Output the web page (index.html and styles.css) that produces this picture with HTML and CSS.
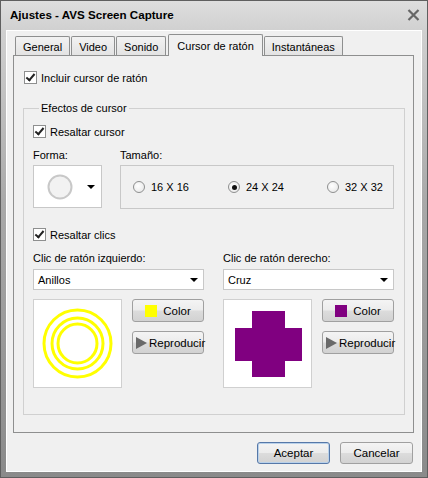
FILE: index.html
```html
<!DOCTYPE html>
<html lang="es">
<head>
<meta charset="utf-8">
<title>Ajustes - AVS Screen Capture</title>
<link rel="stylesheet" href="styles.css">
</head>
<body>
<div class="window">
  <div class="titlebar">
    <span class="title">Ajustes - AVS Screen Capture</span>
    <svg class="close" width="13" height="12" viewBox="0 0 13 12"><path d="M1.5 1 L11.5 11 M11.5 1 L1.5 11" stroke="#666666" stroke-width="2.2"/></svg>
  </div>
  <div class="client">
    <div class="tabs">
      <div class="tab">General</div>
      <div class="tab">Video</div>
      <div class="tab">Sonido</div>
      <div class="tab active">Cursor de ratón</div>
      <div class="tab">Instantáneas</div>
    </div>
    <div class="panel">
      <div class="check top-check"><span class="cb checked"></span><span>Incluir cursor de ratón</span></div>
      <fieldset class="group">
        <legend>Efectos de cursor</legend>
        <div class="check"><span class="cb checked"></span><span>Resaltar cursor</span></div>
        <div class="shape-row">
          <div class="forma">
            <div class="label">Forma:</div>
            <div class="forma-box">
              <svg width="26" height="26" viewBox="0 0 26 26"><circle cx="13" cy="13" r="11.5" fill="#f2f2f2" stroke="#c8c8c8" stroke-width="2"/></svg>
              <span class="arrow"></span>
            </div>
          </div>
          <div class="tamano">
            <div class="label">Tamaño:</div>
            <div class="size-box">
              <div class="radio-item"><span class="rb"></span><span>16 X 16</span></div>
              <div class="radio-item"><span class="rb on"></span><span>24 X 24</span></div>
              <div class="radio-item"><span class="rb"></span><span>32 X 32</span></div>
            </div>
          </div>
        </div>
        <div class="check clics-check"><span class="cb checked"></span><span>Resaltar clics</span></div>
        <div class="clicks">
          <div class="click-col">
            <div class="label">Clic de ratón izquierdo:</div>
            <div class="combo"><span>Anillos</span><span class="arrow"></span></div>
            <div class="preview-row">
              <div class="preview">
                <svg width="87" height="87" viewBox="0 0 87 87">
                  <circle cx="43.5" cy="43.5" r="33.5" fill="none" stroke="#ffff00" stroke-width="3"/>
                  <circle cx="43.5" cy="43.5" r="25.5" fill="none" stroke="#ffff00" stroke-width="3"/>
                  <circle cx="43.5" cy="43.5" r="19.5" fill="none" stroke="#ffff00" stroke-width="3"/>
                </svg>
              </div>
              <div class="btn-col">
                <div class="btn"><span class="swatch yellow"></span><span>Color</span></div>
                <div class="btn"><span class="play"></span><span>Reproducir</span></div>
              </div>
            </div>
          </div>
          <div class="click-col">
            <div class="label">Clic de ratón derecho:</div>
            <div class="combo"><span>Cruz</span><span class="arrow"></span></div>
            <div class="preview-row">
              <div class="preview">
                <svg width="87" height="87" viewBox="0 0 87 87">
                  <path d="M28 11 H61 V28 H78 V61 H61 V77 H28 V61 H11 V28 H28 Z" fill="#800080"/>
                </svg>
              </div>
              <div class="btn-col">
                <div class="btn"><span class="swatch purple"></span><span>Color</span></div>
                <div class="btn"><span class="play"></span><span>Reproducir</span></div>
              </div>
            </div>
          </div>
        </div>
      </fieldset>
    </div>
    <div class="buttons">
      <div class="btn dlg default">Aceptar</div>
      <div class="btn dlg">Cancelar</div>
    </div>
  </div>
</div>
</body>
</html>
```

FILE: styles.css
```css
* { box-sizing: border-box; }
html, body { margin: 0; padding: 0; }
body {
  width: 428px;
  height: 478px;
  overflow: hidden;
  font-family: "Liberation Sans", Arial, sans-serif;
  font-size: 11px;
  color: #000;
  background: #ffffff;
}
.window {
  width: 428px;
  height: 478px;
  border: 1px solid #5f5f5f;
  background: linear-gradient(#dedede 0px, #d0d0d0 30px, #a9a9a9 200px, #8a8a8a 478px);
  display: flex;
  flex-direction: column;
  padding: 0 5px 5px 5px;
}
.titlebar {
  height: 29px;
  display: flex;
  align-items: center;
  justify-content: space-between;
  padding: 0 2px 2px 4px;
}
.title {
  font-weight: bold;
  font-size: 11.6px;
  color: #000;
}
.client {
  flex: 1;
  background: #f0f0f0;
  border: 1px solid #ffffff;
  display: flex;
  flex-direction: column;
  padding: 3px 7px 0 6px;
}
.tabs {
  display: flex;
  align-items: flex-end;
  height: 21px;
  padding-left: 2px;
  position: relative;
  z-index: 1;
}
.tab {
  height: 19px;
  border: 1px solid #8e8f8f;
  border-bottom: none;
  background: linear-gradient(#f2f2f2, #e3e3e3);
  padding: 3px 7px 0 7px;
  margin-right: 1px;
  border-radius: 2px 2px 0 0;
  line-height: 14px;
}
.tab.active {
  background: #f0f0f0;
  padding: 4px 8px 0 8px;
  margin-left: 1px;
  margin-bottom: -1px;
  height: 22px;
}
.panel {
  height: 378px;
  border: 1px solid #8e8f8f;
  background: #f0f0f0;
  padding: 15px 8px 0 9px;
}
.check {
  display: flex;
  align-items: center;
  height: 13px;
}
.cb {
  width: 13px;
  height: 13px;
  border: 1px solid #8e8f8f;
  background: #ffffff;
  margin-right: 4px;
  flex: none;
  position: relative;
}
.cb.checked::after {
  content: "";
  position: absolute;
  left: 3px;
  top: 0px;
  width: 3px;
  height: 7px;
  border: solid #222;
  border-width: 0 2px 2px 0;
  transform: rotate(40deg);
}
.top-check { margin-left: 1px; }
.group {
  margin: 18px 0 0 0;
  padding: 10px 10px 0 9px;
  border: 1px solid #d0d0d0;
  height: 313px;
  min-inline-size: 0;
}
.group legend {
  padding: 0 2px;
  margin-left: 6px;
  line-height: 13px;
}
.label { line-height: 13px; height: 13px; }
.shape-row {
  display: flex;
  margin-top: 11px;
}
.forma { width: 87px; }
.forma .label { margin-bottom: 3px; }
.forma-box {
  width: 69px;
  height: 43px;
  border: 1px solid #c8c8c8;
  background: #ffffff;
  display: flex;
  align-items: center;
  padding-left: 13px;
}
.forma-box .arrow { margin-left: 14px; }
.arrow {
  width: 0;
  height: 0;
  border-left: 4px solid transparent;
  border-right: 4px solid transparent;
  border-top: 4px solid #000;
}
.tamano { flex: 1; }
.tamano .label { margin-bottom: 3px; }
.size-box {
  height: 44px;
  border: 1px solid #c8c8c8;
  display: flex;
  align-items: center;
  padding-left: 12px;
}
.radio-item { display: flex; align-items: center; }
.radio-item:nth-child(1) { width: 95px; }
.radio-item:nth-child(2) { width: 99px; }
.rb {
  width: 12px;
  height: 12px;
  border-radius: 50%;
  border: 1px solid #8e8f8f;
  background: radial-gradient(circle at 40% 40%, #ffffff, #e4e4e4);
  margin-right: 6px;
  position: relative;
}
.rb.on::after {
  content: "";
  position: absolute;
  left: 2.5px;
  top: 2.5px;
  width: 5px;
  height: 5px;
  border-radius: 50%;
  background: #111;
}
.clics-check { margin-top: 19px; }
.clicks {
  display: flex;
  gap: 19px;
  margin-top: 11px;
}
.click-col { width: 171px; }
.combo {
  margin-top: 4px;
  height: 21px;
  border: 1px solid #c8c8c8;
  background: #ffffff;
  display: flex;
  align-items: center;
  justify-content: space-between;
  padding: 0 5px 0 4px;
}
.preview-row {
  display: flex;
  justify-content: space-between;
  margin-top: 9px;
}
.preview {
  width: 89px;
  height: 89px;
  border: 1px solid #d0d0d0;
  background: #ffffff;
}
.preview svg { display: block; }
.btn-col { display: flex; flex-direction: column; gap: 9px; }
.btn {
  width: 72px;
  height: 23px;
  border: 1px solid #a0a0a0;
  border-radius: 3px;
  background: linear-gradient(#f4f4f4 0%, #ececec 48%, #dcdcdc 52%, #d2d2d2 100%);
  display: flex;
  align-items: center;
  justify-content: center;
  font-size: 11.5px;
}
.swatch {
  width: 12px;
  height: 12px;
  margin-right: 6px;
}
.swatch.yellow { background: #ffff00; }
.swatch.purple { background: #800080; }
.btn-col .btn:nth-child(2) { justify-content: flex-start; padding-left: 3px; }
.play {
  width: 0;
  height: 0;
  border-top: 6px solid transparent;
  border-bottom: 6px solid transparent;
  border-left: 11px solid #6a6a6a;
  margin-right: 2px;
}
.buttons {
  display: flex;
  justify-content: flex-end;
  gap: 10px;
  padding-top: 9px;
  padding-right: 1px;
}
.btn.dlg { width: 73px; height: 22px; font-size: 11.5px; }
.btn.default { border-color: #5678a8; box-shadow: inset 0 0 0 1px #b9d1ea; }
```
